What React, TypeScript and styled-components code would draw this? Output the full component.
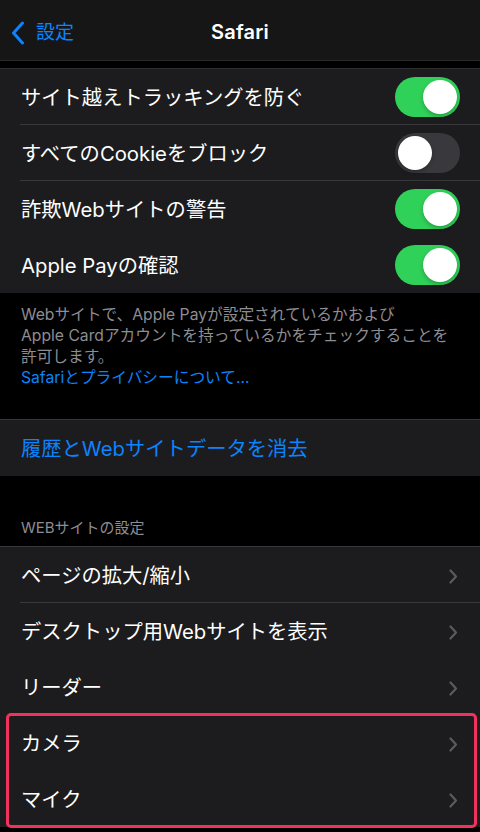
import styled, { createGlobalStyle } from 'styled-components';

const GlobalStyle = createGlobalStyle`
  * { box-sizing: border-box; }
  html, body { margin: 0; padding: 0; background: #000; }
  body {
    font-family: "Inter", "Noto Sans CJK JP", sans-serif;
    color: #fff;
    -webkit-font-smoothing: antialiased;
  }
`;

interface IRow {
  label: string;
  toggle?: boolean;
  on?: boolean;
  divider?: boolean;
}

const privacyRows: IRow[] = [
  { label: 'サイト越えトラッキングを防ぐ', toggle: true, on: true },
  { label: 'すべてのCookieをブロック', toggle: true, on: false, divider: true },
  { label: '詐欺Webサイトの警告', toggle: true, on: true, divider: true },
  { label: 'Apple Payの確認', toggle: true, on: true },
];

const siteRows: IRow[] = [
  { label: 'ページの拡大/縮小', divider: true },
  { label: 'デスクトップ用Webサイトを表示', divider: true },
  { label: 'リーダー' },
];

const markedRows: IRow[] = [{ label: 'カメラ' }, { label: 'マイク' }];

const Chevron = () => (
  <ChevronSt width="9" height="15" viewBox="0 0 9 15">
    <path d="M1.5 1.5 L7 7.5 L1.5 13.5" fill="none" stroke="currentColor" strokeWidth="2.2" strokeLinecap="round" strokeLinejoin="round" />
  </ChevronSt>
);

const Row = ({ label, toggle, on, divider }: IRow) => (
  <RowSt divider={!!divider}>
    <Label>{label}</Label>
    {toggle ? (
      <Switch on={!!on}>
        <Knob on={!!on} />
      </Switch>
    ) : (
      <Chevron />
    )}
  </RowSt>
);

export default function App() {
  return (
    <>
      <GlobalStyle />
      <Screen>
        <NavBar>
          <Back>
            <svg width="14" height="24" viewBox="0 0 14 24">
              <path d="M11.5 2 L2.5 12 L11.5 22" fill="none" stroke="#0a84ff" strokeWidth="3" strokeLinecap="round" strokeLinejoin="round" />
            </svg>
            <BackText>設定</BackText>
          </Back>
          <Title>Safari</Title>
        </NavBar>

        <Group first>
          {privacyRows.map((r) => (
            <Row key={r.label} {...r} />
          ))}
        </Group>

        <Footer>
          Webサイトで、Apple Payが設定されているかおよび
          <br />
          Apple Cardアカウントを持っているかをチェックすることを
          <br />
          許可します。
          <br />
          <FooterLink>Safariとプライバシーについて...</FooterLink>
        </Footer>

        <Group>
          <RowSt divider={false}>
            <ActionLabel>履歴とWebサイトデータを消去</ActionLabel>
          </RowSt>
        </Group>

        <SectionHeader>WEBサイトの設定</SectionHeader>

        <Group>
          {siteRows.map((r) => (
            <Row key={r.label} {...r} />
          ))}
          <Marked>
            {markedRows.map((r) => (
              <Row key={r.label} {...r} />
            ))}
          </Marked>
        </Group>
      </Screen>
    </>
  );
}

const Screen = styled.div`
  width: 480px;
  height: 832px;
  overflow: hidden;
  background: #000;
  display: flex;
  flex-direction: column;
`;

const NavBar = styled.div`
  position: relative;
  height: 61px;
  flex-shrink: 0;
  background: #161617;
  border-bottom: 1px solid #2a2a2c;
  display: flex;
  align-items: center;
  justify-content: center;
`;

const Back = styled.div`
  position: absolute;
  left: 11px;
  top: 21px;
  display: flex;
  align-items: center;
  gap: 11px;
  color: #0a84ff;
`;

const BackText = styled.span`
  font-size: 19px;
  line-height: 24px;
`;

const Title = styled.div`
  font-size: 20px;
  font-weight: 600;
  letter-spacing: 0.2px;
  margin-top: 4px;
`;

const Group = styled.div<{ first?: boolean }>`
  flex-shrink: 0;
  background: #1c1c1e;
  border-top: 1px solid ${({ first }) => (first ? '#2e2e30' : '#38383a')};
  margin-top: ${({ first }) => (first ? '7px' : '0')};
`;

const RowSt = styled.div<{ divider: boolean }>`
  position: relative;
  height: 56px;
  padding: 2px 20px 0 21px;
  display: flex;
  align-items: center;
  justify-content: space-between;
  &::before {
    content: '';
    display: ${({ divider }) => (divider ? 'block' : 'none')};
    position: absolute;
    top: -1px;
    left: 20px;
    right: 0;
    height: 1px;
    background: #38383a;
  }
`;

const Label = styled.span`
  font-size: 20.3px;
  line-height: 26px;
  color: #fff;
`;

const ActionLabel = styled(Label)`
  color: #0a84ff;
`;

const Switch = styled.div<{ on: boolean }>`
  width: 65px;
  height: 40px;
  margin-top: -2px;
  border-radius: 20px;
  padding: 3px;
  background: ${({ on }) => (on ? '#30d158' : '#39393d')};
  display: flex;
  justify-content: ${({ on }) => (on ? 'flex-end' : 'flex-start')};
`;

const Knob = styled.div<{ on: boolean }>`
  width: 34px;
  height: 34px;
  border-radius: 50%;
  background: #fff;
  box-shadow: 0 2px 4px rgba(0, 0, 0, 0.25);
`;

const ChevronSt = styled.svg`
  color: #5a5a5f;
  margin-right: 2px;
`;

const Footer = styled.div`
  flex-shrink: 0;
  padding: 11px 20px 31px 21px;
  font-size: 15.7px;
  line-height: 21px;
  color: #8d8d93;
`;

const FooterLink = styled.span`
  color: #0a84ff;
`;

const SectionHeader = styled.div`
  flex-shrink: 0;
  padding: 42px 21px 9px;
  font-size: 15px;
  line-height: 19px;
  color: #8d8d93;
`;

const Marked = styled.div`
  position: relative;
  &::after {
    content: '';
    position: absolute;
    top: -2px;
    left: 6px;
    right: 3px;
    bottom: -1px;
    border: 3px solid #f2325e;
    border-radius: 5px;
    pointer-events: none;
  }
`;
